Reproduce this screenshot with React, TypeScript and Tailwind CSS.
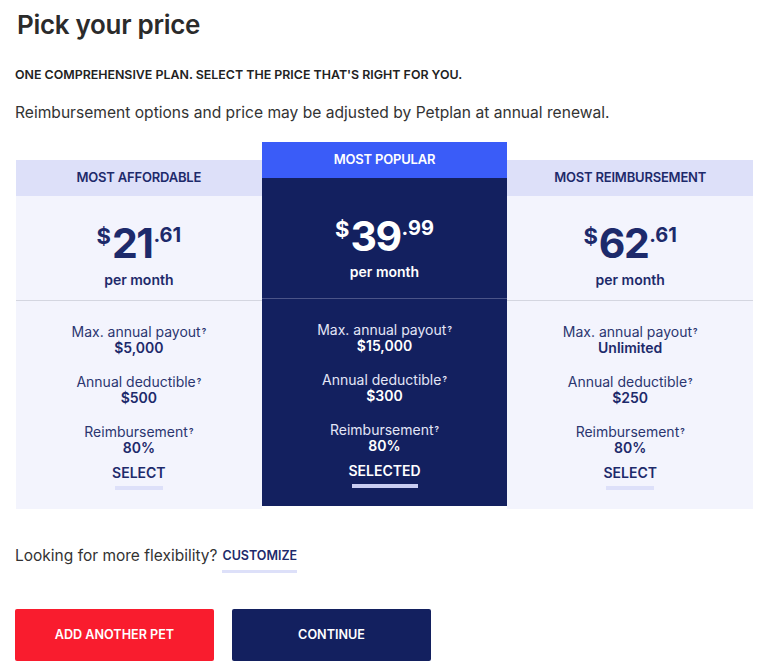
import React from "react";

type Plan = {
  tag: string;
  dollars: string;
  cents: string;
  payout: string;
  deductible: string;
  reimb: string;
  featured?: boolean;
};

const plans: Plan[] = [
  { tag: "MOST AFFORDABLE", dollars: "21", cents: ".61", payout: "$5,000", deductible: "$500", reimb: "80%" },
  { tag: "MOST POPULAR", dollars: "39", cents: ".99", payout: "$15,000", deductible: "$300", reimb: "80%", featured: true },
  { tag: "MOST REIMBURSEMENT", dollars: "62", cents: ".61", payout: "Unlimited", deductible: "$250", reimb: "80%" },
];

function Detail({ label, value, featured }: { label: string; value: string; featured?: boolean }) {
  return (
    <div className="flex flex-col items-center">
      <div className={`text-[14px] leading-[16px] ${featured ? "text-[#e3e6f7]" : "text-[#2b3670]"}`}>
        {label}
        <sup className="text-[8px] font-bold ml-[1px] relative top-[-3px]">?</sup>
      </div>
      <div className={`text-[14px] leading-[16px] font-semibold ${featured ? "text-white" : "text-[#1d2a6b]"}`}>{value}</div>
    </div>
  );
}

function Column({ p }: { p: Plan }) {
  const f = p.featured;
  return (
    <div
      className={`w-[246px] flex flex-col ${
        f ? "h-[364px] bg-[#13205f]" : "h-[349px] mt-[18px] bg-[#f3f4fd]"
      }`}
    >
      <div
        className={`h-[36px] flex items-center justify-center text-[13px] font-semibold tracking-[-0.2px] ${
          f ? "bg-[#3a5cf8] text-white" : "bg-[#dde0f9] text-[#1d2a6b]"
        }`}
      >
        {p.tag}
      </div>
      <div
        className={`flex flex-col items-center border-b ${
          f ? "h-[121px] pt-[36px] border-[#4b5488] text-white" : "h-[105px] pt-[25px] border-[#d4d6e0] text-[#1d2a6b]"
        }`}
      >
        <div className="flex items-start h-[44px] font-bold">
          <span className="text-[22px] leading-none mt-[4px] mr-[1px]">$</span>
          <span className="text-[41px] leading-[44px] tracking-[-1.5px]">{p.dollars}</span>
          <span className="text-[20px] leading-none mt-[4px] ml-[1px]">{p.cents}</span>
        </div>
        <div className={`text-[14px] leading-[20px] font-semibold ${f ? "mt-[4px]" : "mt-[5px]"}`}>per month</div>
      </div>
      <div className="flex flex-col items-center pt-[23px]">
        <Detail label="Max. annual payout" value={p.payout} featured={f} />
        <div className="h-[18px]" />
        <Detail label="Annual deductible" value={p.deductible} featured={f} />
        <div className="h-[18px]" />
        <Detail label="Reimbursement" value={p.reimb} featured={f} />
        <div className={`mt-[9px] text-[14px] leading-[16px] font-semibold ${f ? "text-white" : "text-[#1d2a6b]"}`}>
          {f ? "SELECTED" : "SELECT"}
        </div>
        <div className={`mt-[5px] h-[4px] ${f ? "w-[66px] bg-[#c9cdf2]" : "w-[48px] bg-[#dde0f9]"}`} />
      </div>
    </div>
  );
}

export default function App() {
  return (
    <div
      className="w-[768px] h-[671px] bg-white px-[15px] pt-[8px]"
      style={{ fontFamily: "Inter, 'Liberation Sans', sans-serif" }}
    >
      <h1 className="ml-[2px] text-[26px] leading-[34px] font-semibold text-[#2b2b2b] tracking-[-0.3px]">Pick your price</h1>
      <div className="mt-[25px] text-[12.4px] leading-[16px] font-semibold text-[#222]">
        ONE COMPREHENSIVE PLAN. SELECT THE PRICE THAT'S RIGHT FOR YOU.
      </div>
      <p className="mt-[18px] text-[15.6px] leading-[24px] text-[#333]">
        Reimbursement options and price may be adjusted by Petplan at annual renewal.
      </p>
      <div className="mt-[17px] ml-[1px] flex items-start">
        {plans.map((p) => (
          <Column key={p.tag} p={p} />
        ))}
      </div>
      <div className="mt-[35px] h-[30px] flex items-start text-[15.5px] leading-[24px] text-[#333]">
        <span>Looking for more flexibility?</span>
        <span className="ml-[5px] flex flex-col">
          <span className="text-[12.5px] leading-[24px] font-semibold text-[#1d2a6b]">CUSTOMIZE</span>
          <span className="h-[3px] bg-[#dde0f9] mt-[2px]" />
        </span>
      </div>
      <div className="mt-[35px] flex gap-[18px]">
        <button className="w-[199px] h-[52px] rounded-[2px] bg-[#f91c2e] text-white text-[12.6px] font-semibold">
          ADD ANOTHER PET
        </button>
        <button className="w-[199px] h-[52px] rounded-[2px] bg-[#13205f] text-white text-[12.6px] font-semibold">
          CONTINUE
        </button>
      </div>
    </div>
  );
}
